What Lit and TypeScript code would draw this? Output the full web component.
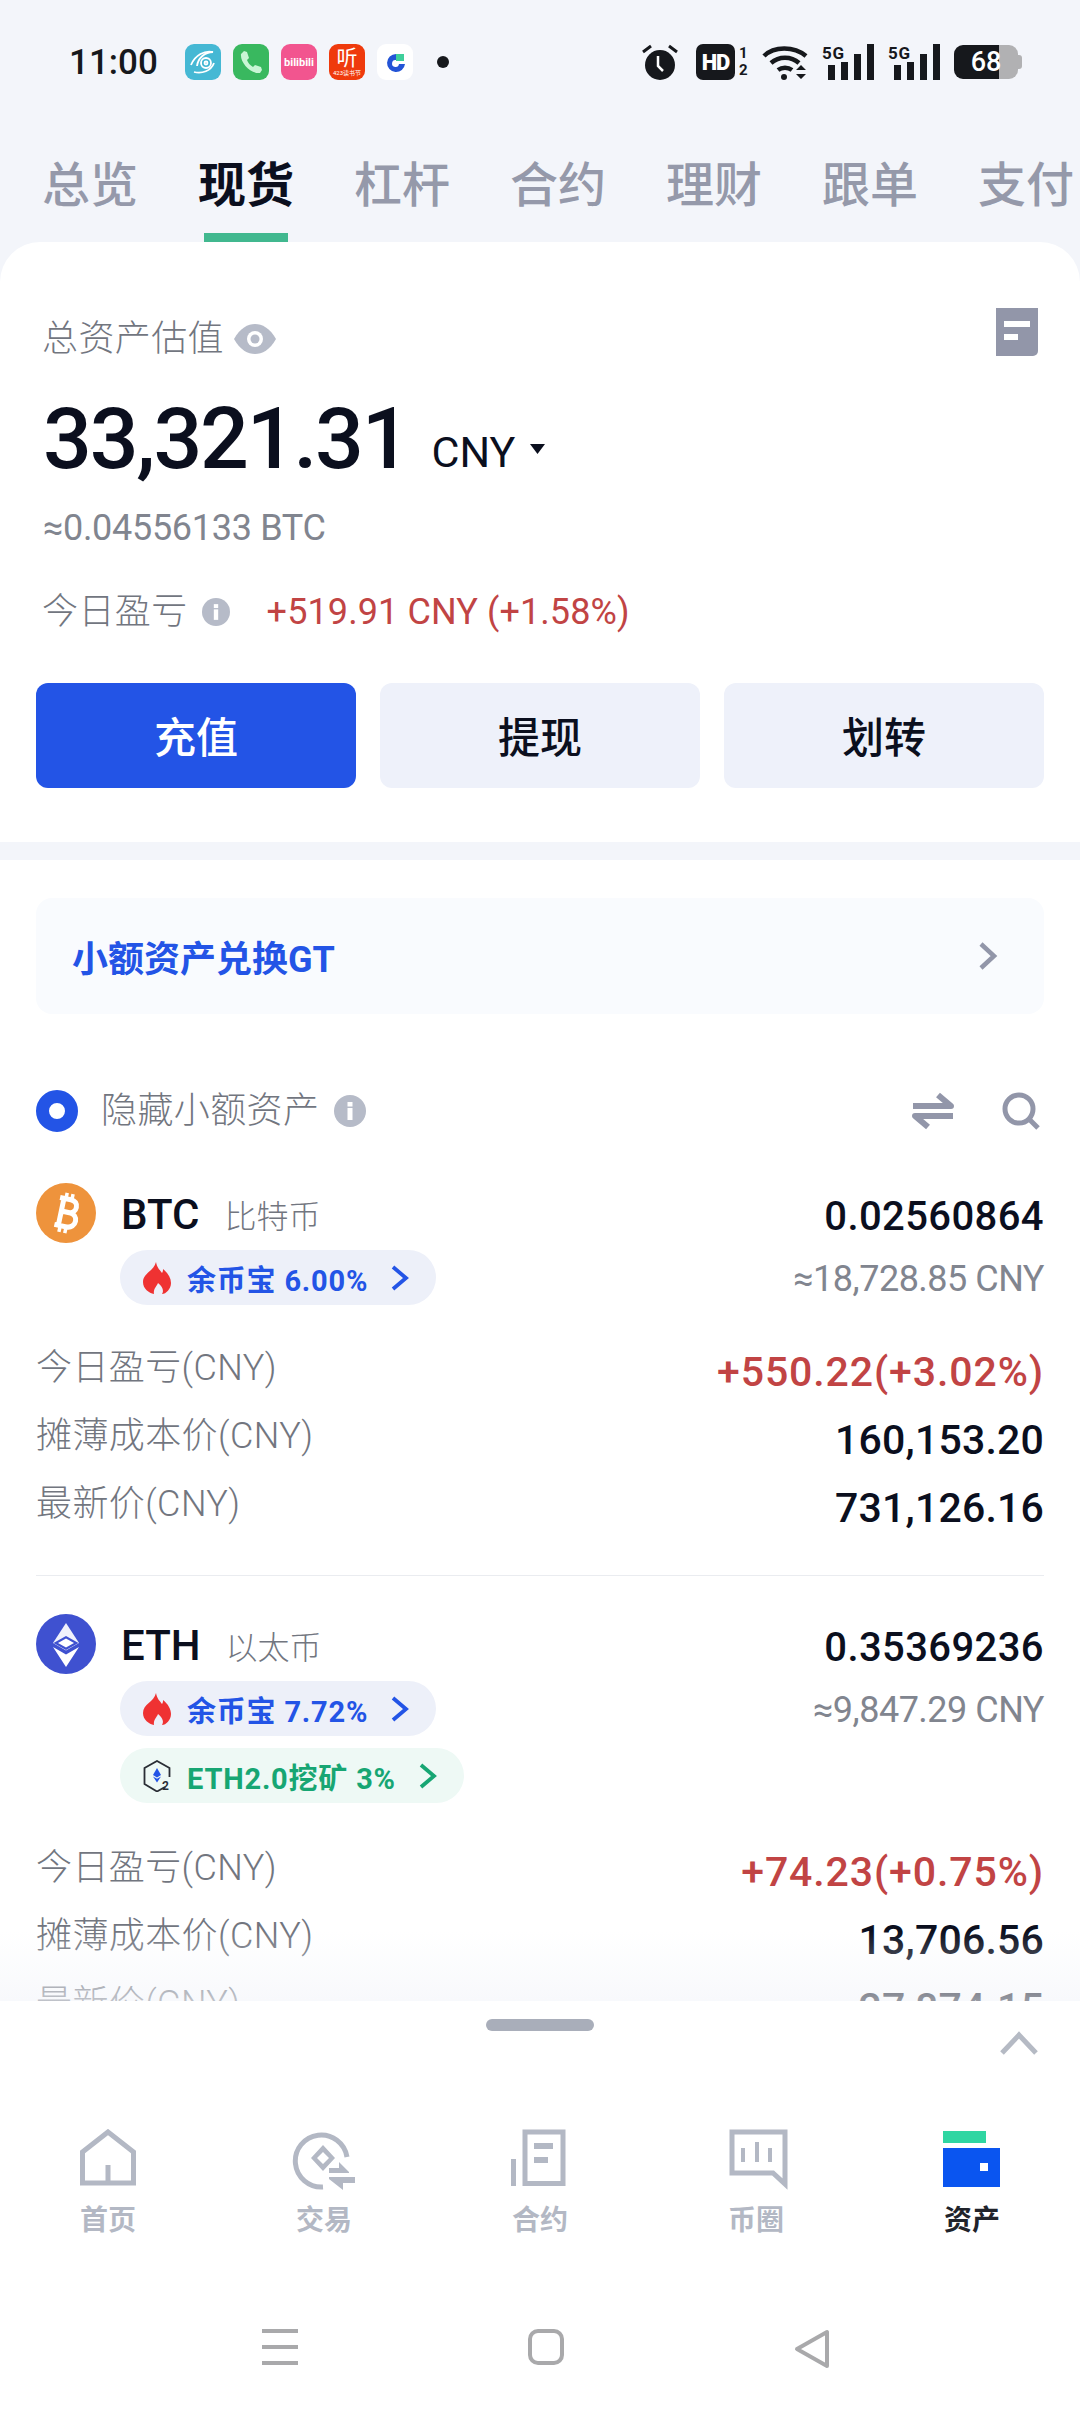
import { css, html, LitElement, svg } from "lit";
import { customElement } from "lit/decorators.js";
import { classMap } from "lit/directives/class-map.js";

interface Pill {
  label: string;
  green?: boolean;
}

interface Coin {
  symbol: string;
  name: string;
  amount: string;
  approx: string;
  pnl: string;
  cost: string;
  price: string;
  pills: Pill[];
}

const TABS = ["总览", "现货", "杠杆", "合约", "理财", "跟单", "支付"];

const COINS: Coin[] = [
  {
    symbol: "BTC",
    name: "比特币",
    amount: "0.02560864",
    approx: "≈18,728.85 CNY",
    pnl: "+550.22(+3.02%)",
    cost: "160,153.20",
    price: "731,126.16",
    pills: [{ label: "余币宝 6.00%" }],
  },
  {
    symbol: "ETH",
    name: "以太币",
    amount: "0.35369236",
    approx: "≈9,847.29 CNY",
    pnl: "+74.23(+0.75%)",
    cost: "13,706.56",
    price: "27,874.15",
    pills: [{ label: "余币宝 7.72%" }, { label: "ETH2.0挖矿 3%", green: true }],
  },
];

const infoIcon = html`<svg class="info" viewBox="0 0 32 32">
  <circle cx="16" cy="16" r="16" fill="#b6bbc8"></circle>
  <rect x="13.5" y="13" width="5" height="12" fill="#fff"></rect>
  <rect x="13.5" y="7" width="5" height="4.5" fill="#fff"></rect>
</svg>`;

const chevron = (color: string) => html`<svg class="pill-chev" viewBox="0 0 20 28">
  <path d="M3 3l13 11L3 25" fill="none" stroke=${color} stroke-width="3.8"></path>
</svg>`;

const flame = html`<svg class="pill-icon" viewBox="0 0 28 32">
  <path
    fill="#ef3232"
    d="M13 0c1 6 4 8 6 11 1-1 1-3 1-4 5 4 8 9 8 14 0 6-5 11-9 11 2-3 1-7-4-11-1 3-5 6-4 11C6 31 0 27 0 20 0 11 11 9 13 0z"
  ></path>
</svg>`;

const hexIcon = html`<svg class="pill-icon" viewBox="0 0 28 32">
  <path d="M22 27l-8 4.500L1.500 24V8L14 1l12.500 7v9" fill="none" stroke="#2a2e35" stroke-width="1.800"></path>
  <path d="M14 8l4 7-4 2.400L10 15z" fill="#2354e6"></path>
  <path d="M10 16.500l4 2.300 4-2.300-4 6z" fill="#2354e6"></path>
  <text x="19" y="30" font-size="12" font-weight="700" fill="#2a2e35" font-family="Roboto">2</text>
</svg>`;

const btcLogo = html`<svg class="coin-logo" viewBox="0 0 60 60">
  <circle cx="30" cy="30" r="30" fill="#ee933c"></circle>
  <g transform="rotate(12 30 30)" fill="none" stroke="#fff">
    <path
      stroke-width="5"
      d="M21 16h11c4.500 0 7 2.500 7 6.500S36.500 29 32 29H24M24 29h9.500c4.500 0 7.500 3 7.500 7s-3 7.500-7.500 7.500H21M25 16v27.500"
    ></path>
    <path stroke-width="3.500" d="M27 10v6M33 10v6M27 43v7M33 43v7"></path>
  </g>
</svg>`;

const ethLogo = html`<svg class="coin-logo" viewBox="0 0 60 60">
  <circle cx="30" cy="30" r="30" fill="#3f51d0"></circle>
  <path d="M30 9l13 20-13 7.500L17 29z" fill="#fff" opacity=".92"></path>
  <path d="M30 22l12.500 7L30 36 17.500 29z" fill="#3f51d0"></path>
  <path d="M30 24.500l8 4.500-8 4.500-8-4.500z" fill="#fff"></path>
  <path d="M17 33l13 7.500L43 33 30 53z" fill="#fff"></path>
</svg>`;

const navItems = [
  {
    label: "首页",
    icon: svg`<path transform="translate(4 0)" d="M28 3L2.500 23v31h51V23zM28 54V36" fill="none" stroke="#b3b8c4" stroke-width="5"></path>`,
  },
  {
    label: "交易",
    icon: svg`<g transform="translate(1 0)">
      <path d="M56 29a26 26 0 1 0-24 30" fill="none" stroke="#b3b8c4" stroke-width="5" transform="translate(-2 -1)"></path>
      <path d="M30 16l12 13-12 13-12-13zM30 23l-6 6 6 6 6-6z" fill="#b3b8c4" fill-rule="evenodd"></path>
      <path d="M36 44h20v-1L46 33v6H36zM36 48h26v6H50v7L36 50z" fill="#b3b8c4"></path>
    </g>`,
  },
  {
    label: "合约",
    icon: svg`<g transform="translate(3 0)">
      <path d="M14 54.500V3h38v51.500z" fill="none" stroke="#b3b8c4" stroke-width="5"></path>
      <rect y="30" width="5" height="27" fill="#b3b8c4"></rect>
      <rect x="23" y="14" width="19" height="6" fill="#b3b8c4"></rect>
      <rect x="23" y="28" width="14" height="6" fill="#b3b8c4"></rect>
    </g>`,
  },
  {
    label: "币圈",
    icon: svg`<g transform="translate(5 0)">
      <path d="M56 51V3H3v41h41l12 11z" fill="none" stroke="#b3b8c4" stroke-width="5"></path>
      <path d="M14 19v14M28 13v20M41 19v14" fill="none" stroke="#b3b8c4" stroke-width="4"></path>
    </g>`,
  },
  {
    label: "资产",
    active: true,
    icon: svg`<g transform="translate(2 0)">
      <rect x="1" y="2" width="43" height="12" fill="#2fd6a2"></rect>
      <rect x="1" y="19" width="57" height="39" fill="#0a55f0"></rect>
      <rect x="38" y="34" width="8" height="8" fill="#fff"></rect>
    </g>`,
  },
];

@customElement("app-root")
export class AppRoot extends LitElement {
  static styles = css`
    * {
      box-sizing: border-box;
      margin: 0;
      padding: 0;
    }

    :host {
      display: block;
      position: relative;
      width: 1080px;
      height: 2412px;
      overflow: hidden;
      background: #f3f5fa;
      font-family: Roboto, "Noto Sans CJK SC", sans-serif;
      color: #0b0f1e;
    }

    svg {
      display: block;
      flex: none;
    }

    .status {
      display: flex;
      align-items: center;
      height: 124px;
      padding-left: 69px;
    }

    .time {
      width: 116px;
      font-size: 35px;
      font-weight: 500;
      color: #16181c;
    }

    .apps {
      display: flex;
      gap: 12px;
    }

    .app {
      display: flex;
      flex-direction: column;
      align-items: center;
      justify-content: center;
      width: 36px;
      height: 36px;
      border-radius: 9px;
      overflow: hidden;
      color: #fff;
    }

    .app-eye { background: #45b8d4; }
    .app-call { background: #39b85f; }
    .app-bili { background: #f2558f; font-size: 11px; font-weight: 700; }
    .app-ting { background: #ef3a0c; font-size: 21px; line-height: 22px; }
    .app-ting small { font-size: 6px; line-height: 8px; white-space: nowrap; }
    .app-g { background: #fff; }

    .dot {
      width: 12px;
      height: 12px;
      margin-left: 24px;
      border-radius: 50%;
      background: #16181c;
    }

    .sys {
      display: flex;
      align-items: center;
      margin-left: auto;
      padding-right: 62px;
      height: 36px;
    }

    .hd {
      display: flex;
      align-items: center;
      justify-content: center;
      width: 39px;
      height: 36px;
      margin-left: 18px;
      border-radius: 7px;
      background: #16181c;
      color: #fff;
      font-size: 22px;
      font-weight: 900;
      letter-spacing: -1px;
    }

    .sims {
      display: flex;
      flex-direction: column;
      width: 10px;
      margin-left: 4px;
      font-size: 15px;
      font-weight: 700;
      line-height: 17px;
      color: #16181c;
    }

    .wifi {
      margin-left: 13px;
    }

    .signal {
      margin-left: 14px;
    }

    .signal text {
      font-family: Roboto, sans-serif;
    }

    .battery {
      display: flex;
      align-items: center;
      justify-content: center;
      position: relative;
      width: 64px;
      height: 34px;
      margin-left: 14px;
      border-radius: 9px;
      background: linear-gradient(90deg, #16181c 70%, #b1b1b3 70%);
      color: #fff;
      font-size: 27px;
      font-weight: 500;
    }

    .battery::after {
      content: "";
      position: absolute;
      right: -4px;
      top: 10px;
      width: 4px;
      height: 14px;
      border-radius: 0 3px 3px 0;
      background: #b1b1b3;
    }

    .tabs {
      display: flex;
      gap: 60px;
      height: 118px;
      padding-left: 42px;
      white-space: nowrap;
    }

    .tab {
      position: relative;
      height: 118px;
      font-size: 48px;
      font-weight: 500;
      line-height: 124px;
      color: #9599aa;
      flex: none;
    }

    .tab.active {
      color: #0b0f1e;
      font-weight: 700;
    }

    .tab.active::after {
      content: "";
      position: absolute;
      left: 6px;
      right: 6px;
      bottom: 0;
      height: 9px;
      background: #41b88f;
    }

    .summary {
      height: 600px;
      padding: 72px 36px 0;
      border-radius: 40px 40px 0 0;
      background: #fff;
    }

    .summary-head {
      display: flex;
      align-items: flex-start;
      height: 50px;
      padding: 0 6px;
    }

    .muted {
      font-size: 36px;
      line-height: 50px;
      font-weight: 300;
      letter-spacing: 0.4px;
      color: #72767f;
    }

    .eye {
      margin: 10px 0 0 10px;
    }

    .doc {
      margin: -6px 0 0 auto;
    }

    .amount {
      display: flex;
      align-items: center;
      height: 96px;
      margin-top: 27px;
      padding-left: 7px;
      line-height: 96px;
    }

    .amount strong {
      font-size: 86px;
      font-weight: 500;
      letter-spacing: -2.2px;
    }

    .amount span {
      margin-left: 23px;
      padding-top: 26px;
      font-size: 43px;
    }

    .caret {
      margin: 20px 0 0 15px;
    }

    .btc-line {
      height: 44px;
      margin-top: 19px;
      padding-left: 7px;
      font-size: 36px;
      line-height: 44px;
      letter-spacing: -0.3px;
      color: #81858f;
    }

    .today {
      display: flex;
      align-items: center;
      height: 44px;
      margin-top: 40px;
      padding-left: 6px;
    }

    .today .muted {
      line-height: 44px;
    }

    .today .info {
      width: 28px;
      height: 28px;
      margin-left: 14px;
    }

    .today b {
      margin-left: 37px;
      font-size: 36px;
      font-weight: 400;
      letter-spacing: 0.1px;
      color: #c14444;
    }

    .actions {
      display: flex;
      gap: 24px;
      margin-top: 49px;
    }

    .action {
      flex: 1;
      height: 105px;
      border-radius: 12px;
      background: #eef1fa;
      font-size: 42px;
      font-weight: 500;
      line-height: 111px;
      text-align: center;
    }

    .action.primary {
      background: #2354e6;
      color: #fff;
    }

    .assets {
      height: 1600px;
      margin-top: 18px;
      padding: 38px 36px 0;
      background: #fff;
    }

    .banner {
      display: flex;
      align-items: center;
      justify-content: space-between;
      height: 116px;
      padding: 0 46px 0 36px;
      border-radius: 16px;
      background: #f9fbfe;
      font-size: 36px;
      font-weight: 700;
      color: #2354e6;
    }

    .filter {
      display: flex;
      align-items: center;
      height: 44px;
      margin-top: 75px;
      white-space: nowrap;
    }

    .radio {
      flex: none;
      width: 42px;
      height: 42px;
      border: 13px solid #2354e6;
      border-radius: 50%;
    }

    .filter .muted {
      margin-left: 23px;
      line-height: 44px;
    }

    .filter .info {
      width: 32px;
      height: 32px;
      margin-left: 15px;
    }

    .filter .swap {
      margin-left: auto;
    }

    .filter .search {
      margin: 0 4px 0 48px;
    }

    .coin {
      padding-top: 50px;
    }

    .coin + .coin {
      margin-top: 35px;
      padding-top: 38px;
      border-top: 1px solid #eaecf0;
    }

    .coin-top {
      display: flex;
      align-items: flex-start;
    }

    .coin-logo {
      width: 60px;
      height: 60px;
    }

    .coin-info {
      margin-left: 24px;
    }

    .coin-name {
      display: flex;
      align-items: center;
      height: 62px;
      padding-left: 1px;
    }

    .coin-name b {
      font-size: 42px;
      font-weight: 500;
    }

    .coin-name span {
      margin-left: 25px;
      font-size: 32px;
      font-weight: 300;
      color: #72767f;
    }

    .pills {
      display: flex;
      flex-direction: column;
      align-items: flex-start;
      gap: 12px;
      margin-top: 5px;
    }

    .pill {
      display: flex;
      align-items: center;
      height: 55px;
      padding: 0 26px 0 23px;
      border-radius: 28px;
      background: #edf0f9;
      font-size: 29px;
      font-weight: 700;
      letter-spacing: 0.8px;
      color: #2354e6;
    }

    .pill.green {
      background: #eef9f5;
      color: #17a673;
    }

    .pill-icon {
      width: 28px;
      height: 32px;
      margin-right: 16px;
    }

    .pill-chev {
      width: 20px;
      height: 28px;
      margin-left: 22px;
    }

    .coin-value {
      margin-left: auto;
      padding-top: 3px;
      text-align: right;
    }

    .coin-value div {
      height: 62px;
      line-height: 62px;
    }

    .coin-amount {
      font-size: 40px;
      font-weight: 500;
      letter-spacing: 0.4px;
    }

    .coin-approx {
      font-size: 36px;
      letter-spacing: -0.5px;
      color: #81858f;
    }

    .stats {
      margin-top: 26px;
    }

    .stats.multi {
      margin-top: 33px;
    }

    .stat {
      display: flex;
      align-items: center;
      justify-content: space-between;
      height: 68px;
    }

    .stat .muted {
      padding-bottom: 4px;
    }

    .stat-value {
      padding-top: 4px;
      font-size: 41px;
      font-weight: 500;
      letter-spacing: 0.2px;
    }

    .stat-value.up {
      letter-spacing: 0.9px;
      color: #c14444;
    }

    .sheet {
      position: absolute;
      left: 0;
      right: 0;
      bottom: 0;
      height: 411px;
      padding-top: 18px;
      border-radius: 34px 34px 0 0;
      background: #fff;
    }

    .sheet::before {
      content: "";
      position: absolute;
      left: 0;
      right: 0;
      bottom: 100%;
      height: 70px;
      background: linear-gradient(rgba(243, 245, 250, 0), rgba(243, 245, 250, 0.6));
    }

    .handle {
      width: 108px;
      height: 12px;
      margin: 0 auto;
      border-radius: 6px;
      background: #a9aeba;
    }

    .expand {
      margin: 0 42px 0 auto;
    }

    .nav {
      display: flex;
      margin-top: 74px;
    }

    .nav-item {
      display: flex;
      flex-direction: column;
      align-items: center;
      width: 216px;
      font-size: 28px;
      font-weight: 700;
      line-height: 36px;
      color: #b3b8c4;
    }

    .nav-item svg {
      width: 64px;
      height: 64px;
      margin-bottom: 10px;
    }

    .nav-item.active {
      color: #20232b;
    }

    .sys-nav {
      display: flex;
      gap: 230px;
      margin-top: 90px;
      padding-left: 262px;
    }
  `;

  private _renderStatus() {
    return html`
      <div class="status">
        <span class="time">11:00</span>
        <div class="apps">
          <div class="app app-eye">
            <svg width="30" height="30" viewBox="0 0 30 30" fill="none" stroke="#fff" stroke-width="1.8">
              <path d="M3 18C7 8 17 3 25 5c-8 0-15 6-16 14M6 25c8 2 17-1 20-9"></path>
              <circle cx="18" cy="16" r="5"></circle>
              <circle cx="18" cy="16" r="1.5"></circle>
            </svg>
          </div>
          <div class="app app-call">
            <svg width="26" height="26" viewBox="0 0 26 26">
              <path
                fill="#c8f5d4"
                d="M6 2l3 1 2 6-2 2c1 3 3 5 6 7l2-2 6 2 1 3-2 3C12 25 2 13 3 5z"
              ></path>
            </svg>
          </div>
          <div class="app app-bili">bilibili</div>
          <div class="app app-ting">听<small>423读书节</small></div>
          <div class="app app-g">
            <svg width="24" height="24" viewBox="0 0 24 24">
              <path d="M13 4a9 9 0 1 0 9 10h-6a3.500 3.500 0 1 1-3-4z" fill="#2354d6"></path>
              <rect x="13" y="4" width="8" height="7" fill="#3ecf9b"></rect>
            </svg>
          </div>
        </div>
        <span class="dot"></span>
        <div class="sys">
          <svg width="36" height="36" viewBox="0 0 36 36">
            <circle cx="18" cy="21" r="15" fill="#16181c"></circle>
            <path d="M1 8l8-6M35 8l-8-6" stroke="#16181c" stroke-width="3"></path>
            <path d="M16 12v10l5 5" fill="none" stroke="#fff" stroke-width="2.5"></path>
          </svg>
          <div class="hd">HD</div>
          <div class="sims"><span>1</span><span>2</span></div>
          <svg class="wifi" width="46" height="36" viewBox="0 0 46 36" fill="none" stroke="#16181c" stroke-width="4.5">
            <path d="M2 12C12 2 32 2 44 12M9 19c8-7 20-7 28 0M16 26c4-3 10-3 14 0"></path>
            <circle cx="22" cy="33" r="3" fill="#16181c" stroke="none"></circle>
            <path d="M34 26l5-5 5 5zM34 30h10l-5 5z" fill="#16181c" stroke="none"></path>
          </svg>
          ${[0, 1].map(
            () => html`<svg class="signal" width="52" height="36" viewBox="0 0 52 36" fill="#16181c">
              <text x="0" y="15" font-size="17" font-weight="700" textLength="22">5G</text>
              <rect x="6" y="21" width="7" height="15"></rect>
              <rect x="19" y="18" width="7" height="18"></rect>
              <rect x="32" y="10" width="7" height="26"></rect>
              <rect x="45" y="0" width="7" height="36"></rect>
            </svg>`,
          )}
          <div class="battery">68</div>
        </div>
      </div>
    `;
  }

  private _renderCoin(coin: Coin, logo: unknown) {
    return html`
      <div class="coin">
        <div class="coin-top">
          ${logo}
          <div class="coin-info">
            <div class="coin-name"><b>${coin.symbol}</b><span>${coin.name}</span></div>
            <div class="pills">
              ${coin.pills.map(
                (pill) => html`<div class=${classMap({ pill: true, green: !!pill.green })}>
                  ${pill.green ? hexIcon : flame}${pill.label}${chevron(pill.green ? "#17a673" : "#2354e6")}
                </div>`,
              )}
            </div>
          </div>
          <div class="coin-value">
            <div class="coin-amount">${coin.amount}</div>
            <div class="coin-approx">${coin.approx}</div>
          </div>
        </div>
        <div class=${classMap({ stats: true, multi: coin.pills.length > 1 })}>
          <div class="stat"><span class="muted">今日盈亏(CNY)</span><span class="stat-value up">${coin.pnl}</span></div>
          <div class="stat"><span class="muted">摊薄成本价(CNY)</span><span class="stat-value">${coin.cost}</span></div>
          <div class="stat"><span class="muted">最新价(CNY)</span><span class="stat-value">${coin.price}</span></div>
        </div>
      </div>
    `;
  }

  protected render() {
    return html`
      ${this._renderStatus()}
      <nav class="tabs">
        ${TABS.map((tab, i) => html`<div class=${classMap({ tab: true, active: i === 1 })}>${tab}</div>`)}
      </nav>

      <section class="summary">
        <div class="summary-head">
          <span class="muted">总资产估值</span>
          <svg class="eye" width="42" height="30" viewBox="0 0 42 30">
            <path d="M0 15C6 4 14 0 21 0s15 4 21 15c-6 11-14 15-21 15S6 26 0 15z" fill="#b6bbc8"></path>
            <circle cx="21" cy="15" r="8" fill="#fff"></circle>
            <circle cx="21" cy="15" r="4.5" fill="#b6bbc8"></circle>
          </svg>
          <svg class="doc" width="42" height="48" viewBox="0 0 42 48">
            <path d="M0 0h42v43a5 5 0 0 1-5 5H0z" fill="#9296a9"></path>
            <rect x="8" y="13" width="26" height="6" fill="#fff"></rect>
            <rect x="8" y="26" width="14" height="6" fill="#fff"></rect>
          </svg>
        </div>
        <div class="amount">
          <strong>33,321.31</strong><span>CNY</span>
          <svg class="caret" width="15" height="10" viewBox="0 0 15 10"><path d="M0 0h15L7.500 10z" fill="#0b0f1e"></path></svg>
        </div>
        <div class="btc-line">≈0.04556133 BTC</div>
        <div class="today">
          <span class="muted">今日盈亏</span>${infoIcon}
          <b>+519.91 CNY (+1.58%)</b>
        </div>
        <div class="actions">
          <div class="action primary">充值</div>
          <div class="action">提现</div>
          <div class="action">划转</div>
        </div>
      </section>

      <section class="assets">
        <div class="banner">
          小额资产兑换GT
          <svg width="20" height="30" viewBox="0 0 20 30">
            <path d="M3 3l13 12L3 27" fill="none" stroke="#9296a9" stroke-width="4.5"></path>
          </svg>
        </div>
        <div class="filter">
          <span class="radio"></span>
          <span class="muted">隐藏小额资产</span>
          ${infoIcon}
          <svg class="swap" width="42" height="38" viewBox="0 0 42 38" fill="none" stroke="#9296a9">
            <path d="M1 14h38L26 3" stroke-width="6" stroke-linejoin="round"></path>
            <path d="M41 24H3l13 11" stroke-width="6" stroke-linejoin="round"></path>
          </svg>
          <svg class="search" width="38" height="38" viewBox="0 0 38 38" fill="none" stroke="#9296a9" stroke-width="5">
            <circle cx="17" cy="17" r="14"></circle>
            <path d="M27 27l9 9"></path>
          </svg>
        </div>
        ${this._renderCoin(COINS[0], btcLogo)} ${this._renderCoin(COINS[1], ethLogo)}
      </section>

      <footer class="sheet">
        <div class="handle"></div>
        <svg class="expand" width="38" height="24" viewBox="0 0 38 24">
          <path d="M2 22L19 4l17 18" fill="none" stroke="#b5bac4" stroke-width="5"></path>
        </svg>
        <div class="nav">
          ${navItems.map(
            (item) => html`<div class=${classMap({ "nav-item": true, active: !!item.active })}>
              <svg viewBox="0 0 64 64">${item.icon}</svg>
              ${item.label}
            </div>`,
          )}
        </div>
        <div class="sys-nav">
          <svg width="36" height="36" viewBox="0 0 36 36" fill="#a9a9ab">
            <rect y="0" width="36" height="4"></rect>
            <rect y="16" width="36" height="4"></rect>
            <rect y="32" width="36" height="4"></rect>
          </svg>
          <svg width="36" height="36" viewBox="0 0 36 36">
            <rect x="2" y="2" width="32" height="32" rx="8" fill="none" stroke="#a9a9ab" stroke-width="4"></rect>
          </svg>
          <svg width="36" height="40" viewBox="0 0 36 40">
            <path d="M33 3v34L3 20z" fill="none" stroke="#a9a9ab" stroke-width="4" stroke-linejoin="round"></path>
          </svg>
        </div>
      </footer>
    `;
  }
}

declare global {
  interface HTMLElementTagNameMap {
    "app-root": AppRoot;
  }
}
